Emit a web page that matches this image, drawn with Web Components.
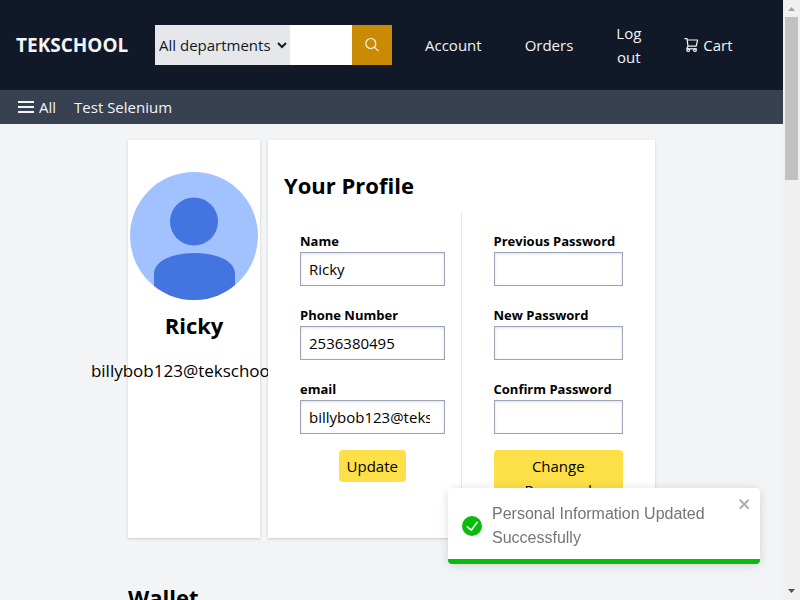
<!DOCTYPE html>
<html lang="en">
<head>
<meta charset="utf-8">
<title>TEKSCHOOL - Your Profile</title>
<style>
  html, body { margin: 0; height: 100%; }
  body { overflow: hidden; background: #f3f4f6; color: #000; font: 15px/24px "Open Sans", "Noto Sans", sans-serif; }
</style>
</head>
<body>
<tek-app></tek-app>

<script>
const define = (name, html, setup) => {
  const template = document.createElement('template');
  template.innerHTML = html;
  customElements.define(name, class extends HTMLElement {
    constructor() {
      super();
      this.attachShadow({ mode: 'open' }).append(template.content.cloneNode(true));
    }
    connectedCallback() { if (setup) setup(this, this.shadowRoot); }
  });
};

define('tek-search', `
  <style>
    :host { display: block; width: 237px; }
    form { display: flex; height: 40px; margin: 0; }
    select, input { border: 0; border-radius: 0; margin: 0; font: inherit; color: #111827; outline: 0; }
    select { width: 135px; padding: 0; background: #e5e7eb; }
    input { flex: 1; min-width: 0; padding: 0 8px; background: #fff; }
    button { width: 40px; padding: 0; border: 0; background: #ca8a04; color: #f3f4f6; display: grid; place-items: center; }
    svg { display: block; }
  </style>
  <form role="search">
    <select aria-label="Department"><option>All departments</option></select>
    <input type="text" aria-label="Search">
    <button type="button" aria-label="Search">
      <svg width="16" height="16" viewBox="0 0 16 16" fill="none" stroke="currentColor" stroke-width="1.2"><circle cx="6.800" cy="6.500" r="5"/><path d="M10.400 10.100 14.400 14.100"/></svg>
    </button>
  </form>`);

define('nav-link', `
  <style>
    :host { display: block; }
    a { display: flex; align-items: center; justify-content: center; gap: 4px; color: #f3f4f6; text-decoration: none; text-align: center; }
  </style>
  <a href="#"><slot name="icon"></slot><span><slot></slot></span></a>`);

define('tek-header', `
  <style>
    :host { display: flex; align-items: center; min-height: 90px; padding: 0 16px; box-sizing: border-box; background: #111827; color: #f3f4f6; }
    .logo { color: inherit; text-decoration: none; font-size: 19px; font-weight: 700; line-height: 28px; width: 115px; white-space: nowrap; }
    tek-search { margin-left: 24px; }
    nav { display: flex; align-items: center; gap: 43px; margin-left: 33px; }
    .narrow { width: min-content; }
    svg { display: block; }
  </style>
  <a class="logo" href="#">TEKSCHOOL</a>
  <tek-search></tek-search>
  <nav aria-label="Account">
    <nav-link>Account</nav-link>
    <nav-link>Orders</nav-link>
    <nav-link class="narrow">Log out</nav-link>
    <nav-link><svg slot="icon" width="15" height="16" viewBox="0 0 15 16" fill="none" stroke="currentColor" stroke-width="1.200" stroke-linejoin="round"><path d="M.5 1.600H3L4 9.600M3.300 3H13.600L12.200 9.100H4L2.800 11.800H12.800"/><circle cx="4.200" cy="13.200" r="1.300"/><circle cx="11" cy="13.200" r="1.300"/></svg>Cart</nav-link>
  </nav>`);

define('tek-subnav', `
  <style>
    :host { display: flex; align-items: center; gap: 18px; min-height: 34px; padding: 0 18px; background: #374151; color: #f3f4f6; }
    button { display: flex; align-items: center; gap: 5px; padding: 0; border: 0; background: none; color: inherit; font: inherit; }
    a { color: inherit; text-decoration: none; }
    svg { display: block; }
  </style>
  <button type="button"><svg width="16" height="14" viewBox="0 0 16 14" stroke="currentColor" stroke-width="2"><path d="M0 2H16M0 7H16M0 12H16"/></svg>All</button>
  <a href="#">Test Selenium</a>`);

define('tek-card', `
  <style>
    :host { display: block; position: relative; box-sizing: border-box; min-width: 0; background: #fff; box-shadow: 0 1px 3px rgba(0,0,0,.12), 0 1px 2px rgba(0,0,0,.06); }
  </style>
  <slot></slot>`);

define('user-summary', `
  <style>
    :host { display: flex; flex-direction: column; align-items: center; padding-top: 32px; }
    svg { display: block; }
    h2 { margin: 9px 0 0; font-size: 22px; font-weight: 700; line-height: 32px; }
    p { margin: 16px 0 0; font-size: 17px; font-weight: 500; line-height: 28px; white-space: nowrap; }
  </style>
  <svg width="128" height="128" viewBox="0 0 128 128" role="img" aria-label="Profile picture">
    <defs><clipPath id="round"><circle cx="64" cy="64" r="64"/></clipPath></defs>
    <g clip-path="url(#round)">
      <rect width="128" height="128" fill="#a1c2ff"/>
      <circle cx="64" cy="49.500" r="24" fill="#4374e0"/>
      <path d="M24 128V102C24 89 42 81 64.500 81S105 89 105 102V128Z" fill="#4374e0"/>
    </g>
  </svg>
  <h2><slot name="name"></slot></h2>
  <p><slot name="email"></slot></p>`);

define('text-field', `
  <style>
    :host { display: block; }
    label { display: block; padding-bottom: 2px; font-size: 13px; font-weight: 700; line-height: 18px; white-space: nowrap; }
    input { display: block; box-sizing: border-box; width: 100%; height: 34px; padding: 0 14px 0 8px; border: 1px solid #9ca3b4; border-radius: 0; background: #fff; color: #000; font: inherit; box-shadow: inset 0 1px 3px rgba(17,24,39,.13); }
  </style>
  <label for="control"></label>
  <input id="control">`,
  (el, root) => {
    root.querySelector('label').textContent = el.getAttribute('label');
    const input = root.querySelector('input');
    input.type = el.getAttribute('type') || 'text';
    input.value = el.getAttribute('value') || '';
  });

define('yellow-button', `
  <style>
    :host { display: block; }
    button { display: block; padding: 4px 8px; border: 0; border-radius: 4px; background: #fde047; color: #000; font: inherit; }
  </style>
  <button type="button"><slot></slot></button>`);

define('profile-form', `
  <style>
    :host { display: block; padding: 16px; }
    h2 { margin: 11px 0 9px; font-size: 22px; font-weight: 700; line-height: 36px; }
    .columns { display: grid; grid-template-columns: 1fr 1fr; }
    form { display: flex; flex-direction: column; align-items: center; gap: 20px; min-width: 0; margin: 0; padding: 20px 16px 16px; }
    form + form { padding-left: 32px; }
    .divided { border-right: 1px solid #e5e7eb; }
    text-field { width: 100%; }
    yellow-button { margin-top: -4px; }
  </style>
  <h2>Your Profile</h2>
  <div class="columns">
    <form class="divided">
      <text-field label="Name" value="Ricky"></text-field>
      <text-field label="Phone Number" value="2536380495"></text-field>
      <text-field label="email" value="billybob123@tekschool.us"></text-field>
      <yellow-button>Update</yellow-button>
    </form>
    <form>
      <text-field label="Previous Password" type="password"></text-field>
      <text-field label="New Password" type="password"></text-field>
      <text-field label="Confirm Password" type="password"></text-field>
      <yellow-button>Change Password</yellow-button>
    </form>
  </div>`);

define('toast-message', `
  <style>
    :host { position: fixed; right: 40px; bottom: 36px; z-index: 5; display: flex; align-items: center; gap: 10px; box-sizing: border-box; width: 312px; padding: 14px 8px 14px 14px; border-radius: 4px; overflow: hidden; background: #fff; color: #757575; box-shadow: 0 1px 10px rgba(0,0,0,.1), 0 2px 15px rgba(0,0,0,.05); font: 16px/24px "Liberation Sans", Arial, sans-serif; }
    .text { flex: 1; }
    svg { display: block; flex: none; }
    button { align-self: flex-start; margin-top: -6px; padding: 0; border: 0; background: none; color: #b0b0b0; }
    .bar { position: absolute; inset: auto 0 0 0; height: 5px; background: #07bc0c; }
  </style>
  <svg width="20" height="20" viewBox="0 0 24 24" fill="#07bc0c"><path d="M12 0a12 12 0 1012 12A12.014 12.014 0 0012 0zm6.927 8.2l-6.845 9.289a1.011 1.011 0 01-1.43.188l-4.888-3.908a1 1 0 111.25-1.562l4.076 3.261 6.227-8.451a1 1 0 111.61 1.183z"/></svg>
  <div class="text" role="alert"><slot></slot></div>
  <button type="button" aria-label="close"><svg width="14" height="16" viewBox="0 0 14 16" fill="currentColor"><path fill-rule="evenodd" d="M7.710 8.230l3.750 3.750-1.480 1.480-3.750-3.750-3.750 3.750L1 11.980l3.750-3.750L1 4.480 2.480 3l3.750 3.750L9.980 3l1.480 1.480-3.750 3.750z"/></svg></button>
  <div class="bar"></div>`);

define('page-scrollbar', `
  <style>
    :host { display: flex; flex-direction: column; align-items: center; justify-content: space-between; background: #f0f0f0; }
    .top { display: flex; flex-direction: column; align-items: center; height: 30%; width: 100%; }
    svg { display: block; flex: none; }
    .thumb { flex: 1; width: 13px; background: #c1c1c1; }
  </style>
  <div class="top"><svg width="17" height="17" viewBox="0 0 17 17"><path d="M5 11 8.500 7 12 11Z" fill="#a3a3a3"/></svg><div class="thumb"></div></div>
  <svg width="17" height="17" viewBox="0 0 17 17"><path d="M5 6 8.500 10 12 6Z" fill="#505050"/></svg>`);

define('tek-app', `
  <style>
    :host { display: grid; grid-template-columns: minmax(0, 1fr) 17px; height: 100vh; overflow: hidden; }
    .page { overflow: hidden; }
    main { padding: 16px 128px; }
    .cards { display: grid; grid-template-columns: minmax(132px, 1fr) 3fr; gap: 8px; }
    h2 { margin: 41px 0 0; font-size: 22px; font-weight: 700; line-height: 36px; }
  </style>
  <div class="page">
    <tek-header></tek-header>
    <tek-subnav></tek-subnav>
    <main>
      <div class="cards">
        <tek-card><user-summary><span slot="name">Ricky</span><span slot="email">billybob123@tekschool.us</span></user-summary></tek-card>
        <tek-card><profile-form></profile-form></tek-card>
      </div>
      <h2>Wallet</h2>
    </main>
  </div>
  <page-scrollbar aria-hidden="true"></page-scrollbar>
  <toast-message>Personal Information Updated Successfully</toast-message>`);
</script>
</body>
</html>
